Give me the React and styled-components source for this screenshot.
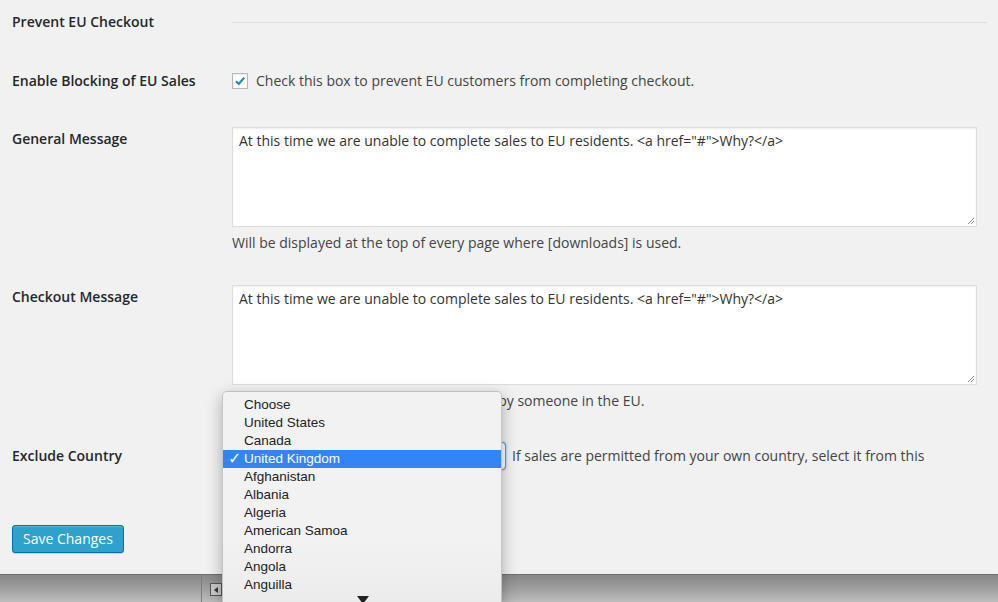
import React from 'react';
import styled, { createGlobalStyle } from 'styled-components';

const GlobalStyle = createGlobalStyle`
	html, body {
		margin: 0;
		padding: 0;
		height: 100%;
		overflow: hidden;
		background: #f1f1f1;
	}
	body {
		font-family: "Open Sans", "Liberation Sans", sans-serif;
		color: #444;
		font-size: 14px;
	}
`;

const Page = styled.div`
	display: flex;
	flex-direction: column;
	height: 100vh;
`;

const Content = styled.div`
	flex: 1;
	padding: 12px 11px 0 12px;
`;

const Row = styled.div`
	display: grid;
	grid-template-columns: 220px 1fr;
	align-items: ${({ center }) => (center ? 'center' : 'start')};
	margin-top: ${({ gap }) => gap || 0}px;
`;

const Label = styled.div`
	font-weight: 600;
	font-size: 14px;
	line-height: 20px;
	color: #23282d;
	padding-top: ${({ offset }) => offset || 0}px;
`;

const Rule = styled.hr`
	border: 0;
	border-top: 1px solid #ddd;
	margin: 0;
`;

const CheckLine = styled.label`
	display: flex;
	align-items: center;
	gap: 8px;
	line-height: 20px;
	color: #444;
`;

const Box = styled.span`
	width: 16px;
	height: 16px;
	box-sizing: border-box;
	background: #fff;
	border: 1px solid #b4b9be;
	box-shadow: inset 0 1px 2px rgba(0, 0, 0, 0.1);
	display: flex;
	align-items: center;
	justify-content: center;
`;

const TextArea = styled.div`
	width: 745px;
	height: 100px;
	box-sizing: border-box;
	background: #fff;
	border: 1px solid #ddd;
	box-shadow: inset 0 1px 2px rgba(0, 0, 0, 0.07);
	padding: 3px 6px;
	line-height: 20px;
	color: #333;
	position: relative;
`;

const Grip = styled.svg`
	position: absolute;
	right: 1px;
	bottom: 1px;
`;

const Description = styled.p`
	margin: 7px 0 0;
	line-height: 18px;
	color: #444;
	white-space: nowrap;
`;

const SelectLine = styled.div`
	display: flex;
	align-items: center;
	gap: 6px;
`;

const SelectWrap = styled.div`
	position: relative;
	width: 274px;
	height: 28px;
`;

const SelectBox = styled.div`
	height: 100%;
	box-sizing: border-box;
	border: 1px solid #5b9dd9;
	border-radius: 4px;
	background: #fff;
	box-shadow: 0 0 2px rgba(30, 140, 190, 0.8);
`;

const Menu = styled.div`
	position: absolute;
	left: -10px;
	top: -51px;
	width: 280px;
	height: 215px;
	box-sizing: border-box;
	padding-top: 4px;
	border-radius: 5px 5px 0 0;
	border: 1px solid rgba(0, 0, 0, 0.18);
	background: linear-gradient(#f2f2f2, #f2f2f2 70%, #ebebeb);
	box-shadow: 0 5px 16px rgba(0, 0, 0, 0.3);
	font-family: "Liberation Sans", Arial, sans-serif;
	font-size: 13.5px;
	color: #222;
	overflow: hidden;
	z-index: 5;
`;

const Item = styled.div`
	position: relative;
	height: 18px;
	line-height: 18px;
	padding-left: 21px;
	background: ${({ active }) => (active ? '#3385f6' : 'transparent')};
	color: ${({ active }) => (active ? '#fff' : '#222')};
`;

const Tick = styled.span`
	position: absolute;
	left: 5px;
	top: 0;
	font-family: "DejaVu Sans", sans-serif;
	font-size: 16px;
	font-weight: bold;
`;

const ScrollArrow = styled.div`
	position: absolute;
	left: 134px;
	top: 204px;
	width: 0;
	height: 0;
	border-left: 6px solid transparent;
	border-right: 6px solid transparent;
	border-top: 8px solid #222;
`;

const Help = styled.span`
	line-height: 20px;
	color: #444;
`;

const SaveButton = styled.button`
	margin-top: 55px;
	height: 28px;
	padding: 0 10px 1px;
	font-family: "Open Sans", "Liberation Sans", sans-serif;
	font-size: 14px;
	color: #fff;
	background: #2ea2cc;
	border: 1px solid #0074a2;
	border-radius: 3px;
	box-shadow: inset 0 1px 0 rgba(120, 200, 230, 0.5), 0 1px 0 rgba(0, 0, 0, 0.15);
`;

const BottomBar = styled.div`
	height: 27px;
	display: flex;
	border-top: 1px solid #6e6e6e;
	background: linear-gradient(#8a8a8a, #8c8c8c 3px, #a0a0a0 14px, #bdbdbd);
`;

const BarSide = styled.div`
	width: 201px;
	border-right: 1px solid #7c7c7c;
`;

const BarButton = styled.div`
	margin: 8px 0 0 8px;
	width: 12px;
	height: 13px;
	box-sizing: border-box;
	border: 1px solid #555;
	background: #c8c8c8;
	display: flex;
	align-items: center;
	justify-content: center;

	&::before {
		content: '';
		border-top: 3px solid transparent;
		border-bottom: 3px solid transparent;
		border-right: 4px solid #333;
	}
`;

const countries = [
	'Choose',
	'United States',
	'Canada',
	'United Kingdom',
	'Afghanistan',
	'Albania',
	'Algeria',
	'American Samoa',
	'Andorra',
	'Angola',
	'Anguilla'
];

const message = 'At this time we are unable to complete sales to EU residents. <a href="#">Why?</a>';

const ResizeGrip = () => (
	<Grip width="9" height="9" viewBox="0 0 9 9">
		<path d="M8 2L2 8M8 5L5 8" stroke="#888" strokeWidth="1" />
	</Grip>
);

const App = () => (
	<Page>
		<GlobalStyle />
		<Content>
			<Row center>
				<Label>Prevent EU Checkout</Label>
				<Rule />
			</Row>

			<Row center gap={39}>
				<Label>Enable Blocking of EU Sales</Label>
				<CheckLine>
					<Box>
						<svg width="12" height="12" viewBox="0 0 12 12">
							<path d="M2 6.2L4.8 9L10.2 2.6" fill="none" stroke="#1e8cbe" strokeWidth="2.2" />
						</svg>
					</Box>
					Check this box to prevent EU customers from completing checkout.
				</CheckLine>
			</Row>

			<Row gap={36}>
				<Label offset={2}>General Message</Label>
				<div>
					<TextArea>
						{message}
						<ResizeGrip />
					</TextArea>
					<Description>Will be displayed at the top of every page where [downloads] is used.</Description>
				</div>
			</Row>

			<Row gap={33}>
				<Label offset={2}>Checkout Message</Label>
				<div>
					<TextArea>
						{message}
						<ResizeGrip />
					</TextArea>
					<Description>Will be shown if a checkout is attempted by someone in the EU.</Description>
				</div>
			</Row>

			<Row center gap={32}>
				<Label>Exclude Country</Label>
				<SelectLine>
					<SelectWrap>
						<SelectBox />
						<Menu>
							{countries.map((name) => (
								<Item key={name} active={name === 'United Kingdom'}>
									{name === 'United Kingdom' && <Tick>✓</Tick>}
									{name}
								</Item>
							))}
							<ScrollArrow />
						</Menu>
					</SelectWrap>
					<Help>If sales are permitted from your own country, select it from this</Help>
				</SelectLine>
			</Row>

			<SaveButton>Save Changes</SaveButton>
		</Content>
		<BottomBar>
			<BarSide />
			<BarButton />
		</BottomBar>
	</Page>
);

export default App;
